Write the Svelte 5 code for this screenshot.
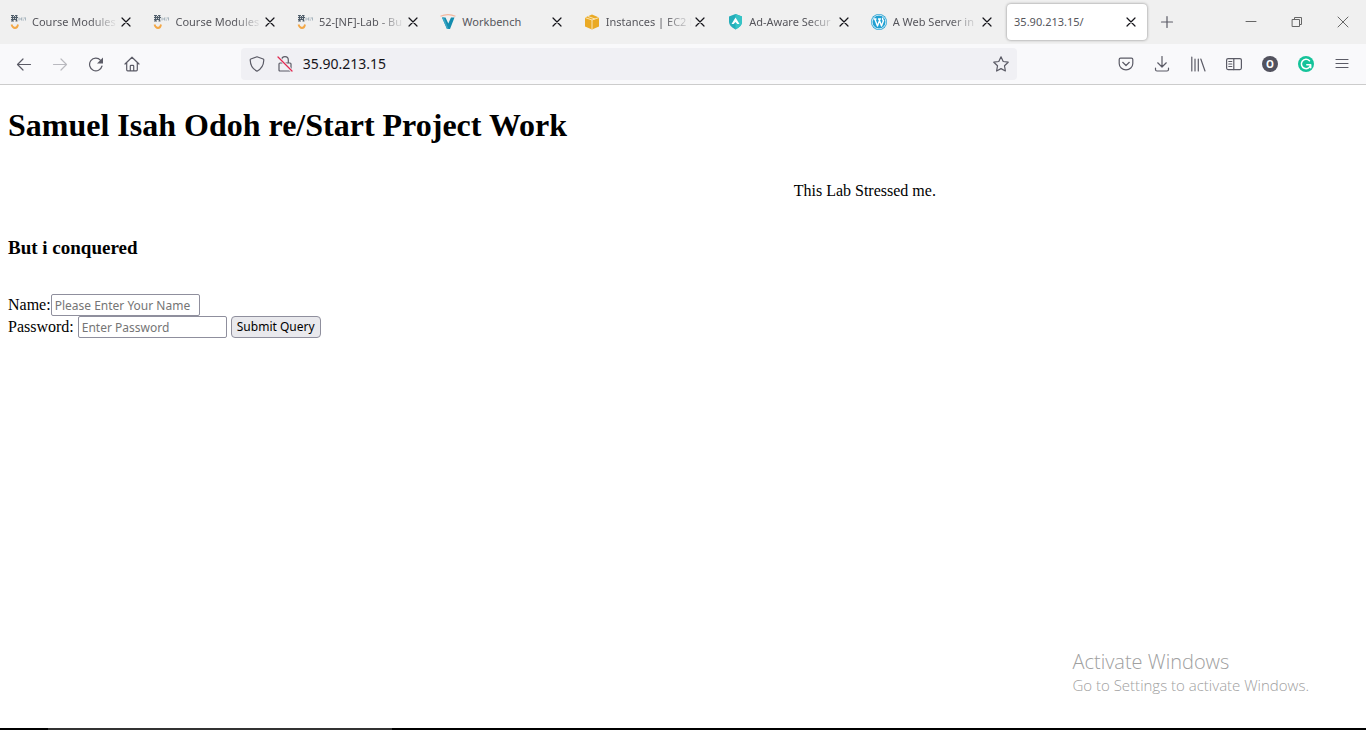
<script>
  const tabs = [
    { title: 'Course Modules', icon: 'aws' },
    { title: 'Course Modules', icon: 'aws' },
    { title: '52-[NF]-Lab - Bu', icon: 'aws' },
    { title: 'Workbench', icon: 'vocareum', short: true },
    { title: 'Instances | EC2 N', icon: 'ec2' },
    { title: 'Ad-Aware Secur', icon: 'adaware' },
    { title: 'A Web Server in', icon: 'wordpress' },
    { title: '35.90.213.15/', icon: null, active: true, short: true }
  ];
  let address = $state('35.90.213.15');
</script>

{#snippet favicon(name)}
  {#if name === 'aws'}
    <svg class="favicon" viewBox="0 0 16 16" aria-hidden="true">
      <path d="M1 1.500h3M5 1.500h2.500M1 3.500h7M1 5.500h6M2.500 1v6M6.500 1v6M4.500 2v4M1 7h3M5.500 7h2" stroke="#4f5d6a" stroke-width="1.200" fill="none" />
      <path d="M9 3.500v3M9.500 5h1.500M11.500 3.500v3M12.500 4h1M12.500 6h1.500M15.500 3.500v3M14 4h1.500" stroke="#a9b6bf" stroke-width="1" fill="none" />
      <path d="M1.500 10.500Q2.500 14 5 14T8 10.500" stroke="#f3a847" stroke-width="1.800" fill="none" />
    </svg>
  {:else if name === 'vocareum'}
    <svg class="favicon" viewBox="0 0 16 16" aria-hidden="true">
      <path d="M.5 2.200Q8-1 15.500 2.200" stroke="#f2b79f" stroke-width="1.200" fill="none" />
      <path d="M2 3.500h3.500L8.300 9.500l2.700-6h3.500L10 15H7z" fill="#138cae" />
      <path d="M2 3.500h2L8.500 15H7z" fill="#3aa6c4" />
    </svg>
  {:else if name === 'ec2'}
    <svg class="favicon" viewBox="0 0 16 16" aria-hidden="true">
      <path d="M1 3.500L8 .500l7 3v9L8 15.500l-7-3z" fill="#eaaa25" />
      <path d="M1 3.500L8 6l7-2.500M8 6v9M4 2.500l7 2.500" stroke="#fae5b5" stroke-width="1" fill="none" />
    </svg>
  {:else if name === 'adaware'}
    <svg class="favicon" viewBox="0 0 16 16" aria-hidden="true">
      <path d="M8.500 0l6.500 2.500v5.500Q15 12 8.500 15.500Q2 12 2 8V2.500z" fill="#25aeba" />
      <path d="M8.500 0l6.500 2.500v5.500Q15 12 8.500 15.500z" fill="#35c4c6" />
      <path d="M8.500 3.500l4 6.500h-2.200L8.500 8 6.700 10H4.500z" fill="#fff" />
    </svg>
  {:else if name === 'wordpress'}
    <svg class="favicon" viewBox="0 0 16 16" aria-hidden="true">
      <circle cx="8" cy="8" r="8" fill="#21a0d2" />
      <circle cx="8" cy="8" r="6.900" fill="none" stroke="#fff" stroke-width=".8" />
      <path d="M2.500 5h3M7 5h3M3.800 5l2.700 7L8.300 7M8 5l2.500 7 2-5.500Q10.800 5 12 3.800" fill="none" stroke="#fff" stroke-width="1.400" />
    </svg>
  {/if}
{/snippet}

<div class="browser">
  <header>
    <div class="tabbar">
      <div class="tabs">
        {#each tabs as tab}
          <div class="tab" class:active={tab.active}>
            <button class="tab-select">
              {@render favicon(tab.icon)}
              <span class="title" class:fade={!tab.short}>{tab.title}</span>
            </button>
            <button class="close" aria-label="Close tab">
              <svg viewBox="0 0 16 16"><path d="M4 4l8 8M12 4l-8 8" stroke="#15141a" stroke-width="1.200" /></svg>
            </button>
          </div>
        {/each}
      </div>
      <button class="tool newtab" aria-label="New tab">
        <svg viewBox="0 0 16 16"><path d="M8 2.500v11M2.500 8h11" /></svg>
      </button>
      <div class="window-controls">
        <button aria-label="Minimize"><svg viewBox="0 0 16 16"><path d="M3 7.500h10" /></svg></button>
        <button aria-label="Restore"><svg viewBox="0 0 16 16"><path d="M3.500 5.500h7v7h-7zM5.500 5.500v-2h7v7h-2" /></svg></button>
        <button aria-label="Close"><svg viewBox="0 0 16 16"><path d="M3 3l10 10M13 3L3 13" /></svg></button>
      </div>
    </div>

    <div class="toolbar">
      <button class="tool" aria-label="Back"><svg viewBox="0 0 16 16"><path d="M14.500 8.500H1.500M7 3L1.500 8.500 7 14" /></svg></button>
      <button class="tool" aria-label="Forward" disabled><svg viewBox="0 0 16 16"><path d="M1.500 8.500h13M9 3l5.500 5.500L9 14" /></svg></button>
      <button class="tool" aria-label="Reload"><svg viewBox="0 0 16 16"><path d="M14 10A6.300 6.300 0 1 1 12.600 4.300" /><path d="M15 1.500v6H9z" fill="#5b5b66" stroke="none" /></svg></button>
      <button class="tool" aria-label="Home"><svg viewBox="0 0 16 16"><path d="M1 8l7-6.800L15 8M2.700 6.500v7.300q0 1 1 1h8.600q1 0 1-1V6.500M6.300 14.500V10q0-.7.700-.7h2q.7 0 .7.700v4.500" /></svg></button>

      <div class="spring"></div>
      <div class="urlbar">
        <button aria-label="Tracking protection"><svg viewBox="0 0 16 16"><path d="M8 .800L14.200 3q.600.200.600 1Q14.500 12 8 15.200Q1.500 12 1.200 4q0-.8.600-1z" /></svg></button>
        <button aria-label="Connection is not secure">
          <svg viewBox="0 0 16 16"><path d="M4.700 7V4a3.300 3.300 0 0 1 6.600 0v3M3 7h10q1 0 1 1v6q0 1-1 1H3q-1 0-1-1V8q0-1 1-1z" /><path d="M1 1l14 14" stroke="#f0f0f4" stroke-width="3" /><path d="M1 1l14 14" stroke="#e22850" stroke-width="1.300" /></svg>
        </button>
        <input type="text" aria-label="Address" bind:value={address} />
        <button aria-label="Bookmark this page"><svg viewBox="0 0 16 16"><path d="M8 .800l2.200 4.700 5 .700-3.700 3.600.900 5.200L8 12.600 3.600 15l.900-5.200L.800 6.200l5-.7z" /></svg></button>
      </div>
      <div class="spring"></div>

      <button class="tool" aria-label="Save to Pocket"><svg viewBox="0 0 16 16"><path d="M2.500 2.200h11q1.300 0 1.300 1.300v4a6.800 6.300 0 0 1-13.600 0v-4q0-1.300 1.300-1.300zM4.700 6.300L8 9.500l3.300-3.200" /></svg></button>
      <button class="tool" aria-label="Downloads"><svg viewBox="0 0 16 16"><path d="M8 .500V11M3.700 6.800L8 11l4.300-4.200M1.500 12v1.500q0 1.500 1.500 1.500h10q1.500 0 1.500-1.500V12" /></svg></button>
      <button class="tool" aria-label="Library"><svg viewBox="0 0 16 16"><path d="M1.800 1v14M5 3v12M8.300 3v12M10.800 3L15 15" /></svg></button>
      <button class="tool" aria-label="Sidebars"><svg viewBox="0 0 16 16"><rect x=".6" y="2.600" width="14.800" height="11" rx="1.500" /><path d="M7.800 2.600v11M2.800 5.500h3M2.800 8h3M2.800 10.500h3" /></svg></button>
      <button class="tool account" aria-label="Account">O</button>
      <button class="tool" aria-label="Grammarly"><svg viewBox="0 0 16 16"><circle cx="8" cy="8" r="8" fill="#15c39a" stroke="none" /><path d="M11.500 4.700A4.700 4.700 0 1 0 12.700 9M8.800 8.800h3.900v3" stroke="#fff" stroke-width="1.500" /></svg></button>
      <button class="tool" aria-label="Open menu"><svg viewBox="0 0 16 16"><path d="M2 3.500h12M2 7.500h12M2 11.500h12" /></svg></button>
    </div>
  </header>

  <main>
    <h1>Samuel Isah Odoh re/Start Project Work</h1>
    <p class="note">This Lab Stressed me.</p>
    <h3>But i conquered</h3>
    <form onsubmit={(e) => e.preventDefault()}>
      <div class="row">
        <label for="name">Name:</label><input id="name" type="text" placeholder="Please Enter Your Name" />
      </div>
      <div class="row spaced">
        <label for="password">Password:</label><input id="password" type="password" placeholder="Enter Password" /><button type="submit">Submit Query</button>
      </div>
    </form>
  </main>

  <aside>
    <div class="activate">Activate Windows</div>
    <div>Go to Settings to activate Windows.</div>
  </aside>
  <footer></footer>
</div>

<style>
  :global(body) { margin: 0; background: #fff; }
  .browser {
    position: relative;
    display: flex;
    flex-direction: column;
    min-height: 100vh;
    color: #000;
    font: 16px/18px "Liberation Serif", "Times New Roman", serif;
  }
  header { font-family: "Noto Sans", "Segoe UI", sans-serif; }
  header button {
    display: flex;
    align-items: center;
    justify-content: center;
    padding: 0;
    border: 0;
    background: none;
    font-family: inherit;
  }
  svg {
    width: 16px;
    height: 16px;
    flex: none;
    fill: none;
    stroke: #5b5b66;
    stroke-width: 1.2;
    stroke-linecap: round;
    stroke-linejoin: round;
  }
  .favicon { stroke: none; stroke-linecap: butt; }

  .tabbar { display: flex; height: 44px; background: #f0f0f0; }
  .tabs { display: flex; flex: 0 1 84%; min-width: 0; }
  .tab {
    display: flex;
    flex: 1;
    align-items: center;
    min-width: 0;
    margin: 4px 1px 4px 3px;
    padding: 0 8px 0 7px;
    border-radius: 4px;
  }
  .tab.active { background: #fff; box-shadow: 0 0 3px rgba(0, 0, 0, 0.45); }
  .tab-select { flex: 1; min-width: 0; gap: 6px; }
  .title {
    flex: 1;
    min-width: 0;
    color: #56565c;
    font-size: 11px;
    line-height: 20px;
    text-align: left;
    white-space: nowrap;
  }
  .title.fade { mask-image: linear-gradient(to left, transparent, #000 28px); }
  .newtab { margin-left: 2px; align-self: center; }
  .window-controls { display: flex; margin-left: auto; }
  .window-controls button { width: 46px; }
  .window-controls svg { stroke-width: 1; stroke: #666; }

  .toolbar {
    display: flex;
    align-items: center;
    height: 40px;
    padding: 0 6px;
    border-bottom: 1px solid #ccc;
    background: #f9f9fb;
  }
  header .tool { flex: none; width: 36px; height: 32px; }
  .tool:disabled { opacity: 0.4; }
  .spring { flex: 91; }
  .urlbar {
    display: flex;
    flex: 776;
    align-items: center;
    min-width: 0;
    height: 32px;
    padding: 0 2px;
    border-radius: 4px;
    background: #f0f0f4;
  }
  .urlbar button { flex: none; width: 28px; height: 32px; }
  .urlbar input {
    flex: 1;
    min-width: 0;
    padding: 0 4px;
    border: 0;
    outline: 0;
    background: none;
    color: #15141a;
    font: 14px/20px "Noto Sans", "Segoe UI", sans-serif;
  }
  header .account {
    width: 16px;
    height: 16px;
    margin: 0 10px;
    border-radius: 50%;
    background: #52525e;
    color: #fff;
    font-size: 10px;
    font-weight: 700;
    line-height: 16px;
  }

  main { flex: 1; padding: 22px 8px; }
  h1 { margin: 0; font-size: 32px; line-height: 37px; }
  .note { margin: 38px 0 37px; padding-left: 58.2%; }
  h3 { margin: 0 0 36px; font-size: 19px; line-height: 21px; }
  .row { display: flex; align-items: center; }
  .spaced { gap: 4px; }
  .row input,
  .row button {
    box-sizing: border-box;
    height: 22px;
    border: 1px solid #8f8f9d;
    font: 12px/18px "Noto Sans", "Segoe UI", sans-serif;
  }
  .row input { width: 149px; padding: 1px 3px; border-radius: 2px; background: #fff; }
  .row input::placeholder { color: #757575; opacity: 1; }
  .row button { padding: 0 5px; border-radius: 4px; background: #e9e9ed; color: #000; }

  aside {
    position: absolute;
    right: 57px;
    bottom: 35px;
    color: #a0a0a0;
    font: 300 15px/20px "Open Sans", "Segoe UI", sans-serif;
  }
  .activate { font-size: 20px; line-height: 26px; }
  footer {
    height: 2px;
    background: linear-gradient(to right, #000 48px, #333 48px, #333 392px, #000 392px);
  }
</style>
